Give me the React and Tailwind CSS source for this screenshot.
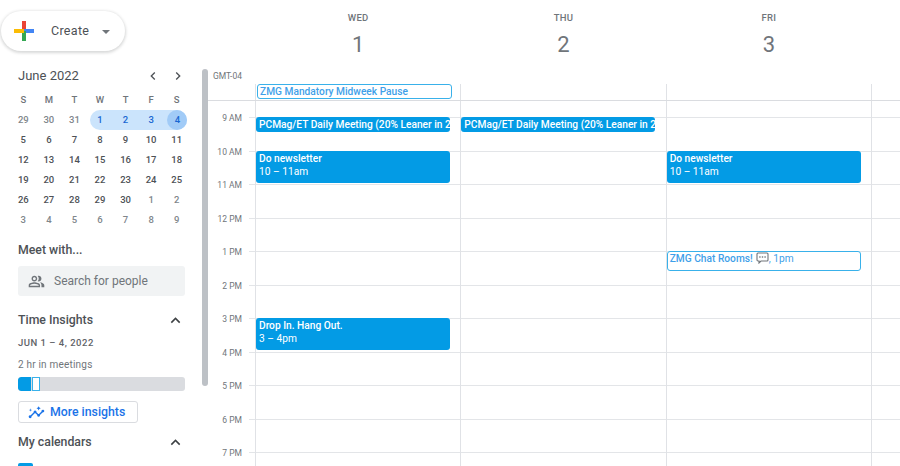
import React from "react";
import { MdChevronLeft, MdChevronRight, MdExpandLess, MdInsights, MdOutlinePeopleAlt } from "react-icons/md";

const miniWeeks = [
  ["29", "30", "31", "1", "2", "3", "4"],
  ["5", "6", "7", "8", "9", "10", "11"],
  ["12", "13", "14", "15", "16", "17", "18"],
  ["19", "20", "21", "22", "23", "24", "25"],
  ["26", "27", "28", "29", "30", "1", "2"],
  ["3", "4", "5", "6", "7", "8", "9"],
];

const hours = ["9 AM", "10 AM", "11 AM", "12 PM", "1 PM", "2 PM", "3 PM", "4 PM", "5 PM", "6 PM", "7 PM"];

const GoogleMark = () => (
  <svg width="20" height="20" viewBox="0 0 20 20">
    <rect x="8" y="0" width="4" height="10" fill="#ea4335" />
    <rect x="10" y="8" width="10" height="4" fill="#4285f4" />
    <rect x="8" y="10" width="4" height="10" fill="#34a853" />
    <rect x="0" y="8" width="10" height="4" fill="#fbbc05" />
  </svg>
);

const ChatIcon = () => (
  <svg width="13" height="12" viewBox="0 0 13 12" className="ml-[3px] inline-block align-[-2px]">
    <path d="M2 1h9a1 1 0 0 1 1 1v6a1 1 0 0 1-1 1H5l-2 2V9H2a1 1 0 0 1-1-1V2a1 1 0 0 1 1-1z" fill="none" stroke="#70757a" strokeWidth="1.1" />
    <rect x="3.2" y="4.3" width="1.4" height="1.4" fill="#70757a" />
    <rect x="5.8" y="4.3" width="1.4" height="1.4" fill="#70757a" />
    <rect x="8.4" y="4.3" width="1.4" height="1.4" fill="#70757a" />
  </svg>
);

const MiniCalendar = () => (
  <div className="pl-[10.5px] pr-[12.5px]">
    <div className="flex h-5 items-center justify-between pl-[7.5px] pr-[4px]">
      <span className="text-[13px] font-normal text-[#4d5156]">June 2022</span>
      <div className="flex items-center gap-[9px] text-[#4d5156]">
        <MdChevronLeft size={16} />
        <MdChevronRight size={16} />
      </div>
    </div>
    <div className="mt-[5px] grid grid-cols-7 text-center text-[9.5px] font-medium text-[#70757a]">
      {["S", "M", "T", "W", "T", "F", "S"].map((d, i) => (
        <div key={i} className="flex h-[19px] items-center justify-center">{d}</div>
      ))}
    </div>
    <div className="grid grid-cols-7 text-center text-[9.5px] font-medium">
      {miniWeeks.map((week, w) =>
        week.map((d, i) => {
          const muted = (w === 0 && i < 3) || (w === 4 && i > 4) || w === 5;
          const selected = w === 0 && i >= 3;
          return (
            <div
              key={`${w}-${i}`}
              className={`flex h-5 items-center ${selected ? "bg-[#cbe4fc] text-[#1967d2]" : muted ? "text-[#80868b]" : "text-[#4d5156]"} ${w === 0 && i === 3 ? "ml-[3px] justify-center rounded-l-full pr-[3px]" : ""} ${w === 0 && i === 6 ? "mr-[2px] justify-end rounded-r-full" : "justify-center"}`}
            >
              {w === 0 && i === 6 ? (
                <span className="flex h-5 w-5 items-center justify-center rounded-full bg-[#a1cbf7]">{d}</span>
              ) : (
                d
              )}
            </div>
          );
        })
      )}
    </div>
  </div>
);

const SectionHead = ({ title, className = "" }) => (
  <div className={`flex h-5 items-center justify-between pr-[17px] ${className}`}>
    <span className="text-[12.3px] font-medium text-[#4d5156]">{title}</span>
    <MdExpandLess size={19} className="text-[#3c4043]" />
  </div>
);

const Sidebar = () => (
  <aside className="h-full w-[202px] shrink-0 overflow-hidden">
    <div className="pl-px pt-[11px]">
      <div className="flex h-10 w-[124px] items-center rounded-full bg-white pl-[13px] shadow-[0_1px_3px_1px_rgba(60,64,67,0.2)]">
        <GoogleMark />
        <span className="ml-[17px] text-[12.5px] font-normal tracking-[0.3px] text-[#4d5156]">Create</span>
        <span className="ml-[13px] mt-px h-0 w-0 border-x-[4px] border-t-[4px] border-x-transparent border-t-[#70757a]" />
      </div>
    </div>
    <div className="pt-[15px]">
      <MiniCalendar />
    </div>
    <div className="pl-[18px] pt-[10px]">
      <div className="flex h-5 items-center text-[12.3px] font-medium text-[#4d5156]">Meet with...</div>
      <div className="mt-[6px] flex h-[30px] w-[167px] items-center rounded-[3px] bg-[#f1f3f4] pl-[10px]">
        <MdOutlinePeopleAlt size={17} className="text-[#70757a]" />
        <span className="ml-[9px] text-[12px] text-[#70757a]">Search for people</span>
      </div>
      <SectionHead title="Time Insights" className="mt-[14px]" />
      <div className="mt-[6px] text-[9.5px] font-medium tracking-[0.5px] text-[#5f6368]">JUN 1 – 4, 2022</div>
      <div className="mt-[7px] text-[10px] tracking-[0.2px] text-[#70757a]">2 hr in meetings</div>
      <div className="mt-[5px] flex h-[14px] w-[167px] overflow-hidden rounded-[3px] bg-[#dadce0]">
        <div className="w-[13px] rounded-l-[3px] bg-[#039be5]" />
        <div className="ml-px w-[8px] border border-[#39b1ea] bg-white" />
      </div>
      <button className="mt-[10px] flex h-[22px] w-[120px] items-center rounded-[3px] border border-[#dadce0] bg-white pl-[9px] text-[12.3px] font-medium text-[#1a73e8]">
        <MdInsights size={17} />
        <span className="ml-[5px]">More insights</span>
      </button>
      <SectionHead title="My calendars" className="mt-[9px]" />
      <div className="mt-[11px] h-[15px] w-[15px] rounded-[2px] bg-[#039be5]" />
    </div>
  </aside>
);

const Scrollbar = () => (
  <div className="w-[6px] shrink-0 pt-[69px]">
    <div className="h-[317px] rounded-full bg-[#bdc1c6]" />
  </div>
);

const DayHead = ({ name, num }) => (
  <div className="flex flex-col items-center pl-px pt-[12px] text-[#70757a]">
    <span className="text-[9.5px] font-medium leading-[11px] tracking-[0.3px]">{name}</span>
    <span className="mt-[8px] text-[22px] leading-[28px]">{num}</span>
  </div>
);

const AllDay = ({ children }) => (
  <div className="h-[16px] border-l border-[#e0e2e6]">{children}</div>
);

const EventBlock = ({ top, height, title, time }) => (
  <div
    className="absolute left-0 w-[194px] overflow-hidden whitespace-nowrap rounded-[3px] bg-[#039be5] pl-[3px] text-[10.2px] leading-[12.5px] text-white"
    style={{ top, height }}
  >
    <div className="pt-[2px] font-medium">{title}</div>
    {time && <div>{time}</div>}
  </div>
);

const DayColumn = ({ children }) => (
  <div className="relative border-l border-[#e0e2e6]">
    <div className="h-[16px]" />
    {hours.map((h) => (
      <div key={h} className="h-[33.5px] border-t border-[#e3e5e8]" />
    ))}
    {children}
  </div>
);

const Main = () => (
  <main className="flex min-w-0 flex-1 flex-col overflow-hidden">
    <div className="grid h-[69px] shrink-0 grid-cols-[47px_205.33px_205.33px_205.33px_1fr]">
      <div />
      <DayHead name="WED" num="1" />
      <DayHead name="THU" num="2" />
      <DayHead name="FRI" num="3" />
    </div>
    <div className="grid h-[15px] shrink-0 grid-cols-[47px_1fr]">
      <div className="pr-[13px] pt-[2px] text-right text-[8.5px] leading-[11px] text-[#70757a]">GMT-04</div>
    </div>
    <div className="grid shrink-0 grid-cols-[47px_205.33px_205.33px_205.33px_1fr]">
      <div />
      <AllDay>
        <div className="ml-px h-[15px] w-[195px] overflow-hidden whitespace-nowrap rounded-[3px] border border-[#39b1ea] bg-white pl-[2px] text-[10.2px] font-medium leading-[13px] text-[#3f9fe9]">
          ZMG Mandatory Midweek Pause
        </div>
      </AllDay>
      <AllDay />
      <AllDay />
      <AllDay />
    </div>
    <div className="grid shrink-0 grid-cols-[47px_205.33px_205.33px_205.33px_1fr] border-t border-[#dadce0]">
      <div>
        <div className="h-[16px]" />
        {hours.map((h) => (
          <div key={h} className="relative h-[33.5px]">
            <span className="absolute right-[13px] top-[-5px] text-[8.5px] leading-[12px] text-[#70757a]">{h}</span>
            <span className="absolute right-0 top-0 h-px w-[6px] bg-[#e3e5e8]" />
          </div>
        ))}
      </div>
      <DayColumn>
        <EventBlock top={16} height={15} title="PCMag/ET Daily Meeting (20% Leaner in 2022)" />
        <EventBlock top={50} height={32} title="Do newsletter" time="10 – 11am" />
        <EventBlock top={217} height={32} title="Drop In. Hang Out." time="3 – 4pm" />
      </DayColumn>
      <DayColumn>
        <EventBlock top={16} height={15} title="PCMag/ET Daily Meeting (20% Leaner in 2022)" />
      </DayColumn>
      <DayColumn>
        <EventBlock top={50} height={32} title="Do newsletter" time="10 – 11am" />
        <div className="absolute left-0 top-[150px] h-[20px] w-[194px] overflow-hidden whitespace-nowrap rounded-[3px] border border-[#39b1ea] bg-white pl-[2px] text-[10.2px] font-medium leading-[13px] text-[#3f9fe9]">
          ZMG Chat Rooms!<ChatIcon /><span className="font-normal">, 1pm</span>
        </div>
      </DayColumn>
      <DayColumn />
    </div>
  </main>
);

export default function App() {
  return (
    <div className="flex h-[466px] w-[900px] overflow-hidden bg-white font-['Roboto',sans-serif]">
      <Sidebar />
      <Scrollbar />
      <Main />
    </div>
  );
}
